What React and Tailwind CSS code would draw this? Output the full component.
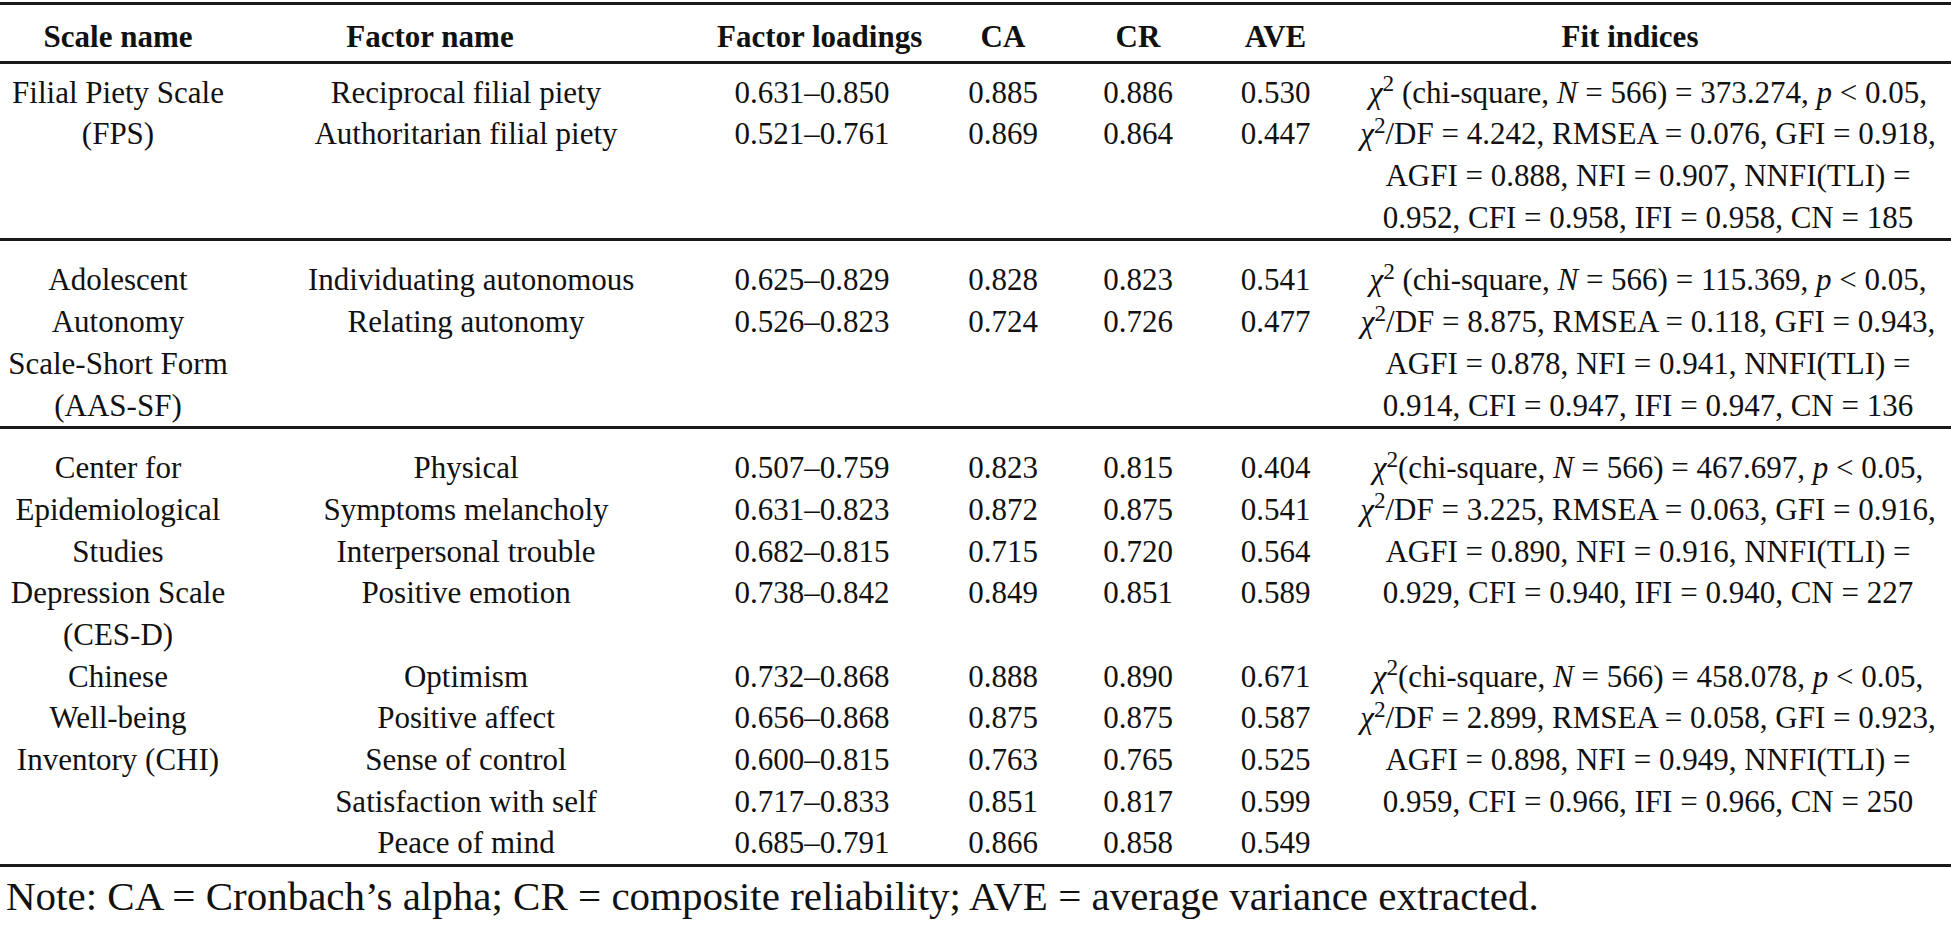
import React from "react";

const Chi = () => (
  <>
    <i>χ</i>
    <sup>2</sup>
  </>
);

const colCls = [
  "text-center",
  "text-center",
  "text-center pl-[93px]",
  "text-center pl-[29px]",
  "text-center",
  "text-center",
  "text-center",
];

const dataCls = [
  "text-center",
  "text-center pl-[72px]",
  "text-center pl-[93px]",
  "text-center pl-[29px]",
  "text-center",
  "text-center",
  "text-center",
];

function Col({ lines, idx }) {
  return (
    <div className={dataCls[idx]}>
      {lines.map((l, i) => (
        <div key={i} className="h-[41.7px] leading-[41.7px] whitespace-nowrap">
          {l}
        </div>
      ))}
    </div>
  );
}

const gridCls =
  "grid grid-cols-[236px_388px_283px_163px_136px_139px_606px] w-[1951px]";

function Group({ cols, top }) {
  return (
    <div className={`${gridCls} ${top} border-b-[3px] border-[#1a1a1a]`}>
      {cols.map((c, i) => (
        <Col key={i} lines={c} idx={i} />
      ))}
    </div>
  );
}

const fit = (a, b, c, d, e, f, g, h, k, sp) => [
  <>
    <Chi />
    {sp ? " " : ""}(chi-square, <i>N</i> = 566) = {a}, <i>p</i> &lt; 0.05,
  </>,
  <>
    <Chi />
    /DF = {b}, RMSEA = {c}, GFI = {d},
  </>,
  <>AGFI = {e}, NFI = {f}, NNFI(TLI) =</>,
  <>
    {g}, CFI = {h}, IFI = {h}, CN = {k}
  </>,
];

export default function App() {
  const g1 = [
    ["Filial Piety Scale", "(FPS)"],
    ["Reciprocal filial piety", "Authoritarian filial piety"],
    ["0.631–0.850", "0.521–0.761"],
    ["0.885", "0.869"],
    ["0.886", "0.864"],
    ["0.530", "0.447"],
    fit("373.274", "4.242", "0.076", "0.918", "0.888", "0.907", "0.952", "0.958", "185", true),
  ];
  const g2 = [
    ["Adolescent", "Autonomy", "Scale-Short Form", "(AAS-SF)"],
    ["Individuating autonomous", "Relating autonomy"],
    ["0.625–0.829", "0.526–0.823"],
    ["0.828", "0.724"],
    ["0.823", "0.726"],
    ["0.541", "0.477"],
    fit("115.369", "8.875", "0.118", "0.943", "0.878", "0.941", "0.914", "0.947", "136", true),
  ];
  const g3 = [
    [
      "Center for",
      "Epidemiological",
      "Studies",
      "Depression Scale",
      "(CES-D)",
      "Chinese",
      "Well-being",
      "Inventory (CHI)",
    ],
    [
      "Physical",
      "Symptoms melancholy",
      "Interpersonal trouble",
      "Positive emotion",
      "",
      "Optimism",
      "Positive affect",
      "Sense of control",
      "Satisfaction with self",
      "Peace of mind",
    ],
    [
      "0.507–0.759",
      "0.631–0.823",
      "0.682–0.815",
      "0.738–0.842",
      "",
      "0.732–0.868",
      "0.656–0.868",
      "0.600–0.815",
      "0.717–0.833",
      "0.685–0.791",
    ],
    ["0.823", "0.872", "0.715", "0.849", "", "0.888", "0.875", "0.763", "0.851", "0.866"],
    ["0.815", "0.875", "0.720", "0.851", "", "0.890", "0.875", "0.765", "0.817", "0.858"],
    ["0.404", "0.541", "0.564", "0.589", "", "0.671", "0.587", "0.525", "0.599", "0.549"],
    [
      ...fit("467.697", "3.225", "0.063", "0.916", "0.890", "0.916", "0.929", "0.940", "227", false),
      "",
      ...fit("458.078", "2.899", "0.058", "0.923", "0.898", "0.949", "0.959", "0.966", "250", false),
    ],
  ];

  const heads = [
    "Scale name",
    "Factor name",
    "Factor loadings",
    "CA",
    "CR",
    "AVE",
    "Fit indices",
  ];

  return (
    <div className="w-[1951px] h-[930px] bg-white text-[#111] font-['Liberation_Serif','Times_New_Roman',serif] text-[31px] overflow-hidden">
      <div className="pt-[2px]">
        <div className={`${gridCls} border-t-[3px] border-b-[3px] border-[#1a1a1a] pt-[11px] pb-[3px] font-bold`}>
          {heads.map((h, i) => (
            <div
              key={i}
              className={`${colCls[i]} ${i === 6 ? "pr-[36px]" : ""} h-[41.7px] leading-[41.7px] whitespace-nowrap`}
            >
              {h}
            </div>
          ))}
        </div>
        <Group cols={g1} top="pt-[8px]" />
        <Group cols={g2} top="pt-[18px]" />
        <Group cols={g3} top="pt-[18px]" />
        <div className="pt-[9px] pl-[6px] text-[41px] leading-[41.7px] whitespace-nowrap">
          Note: CA = Cronbach’s alpha; CR = composite reliability; AVE = average variance extracted.
        </div>
      </div>
    </div>
  );
}
